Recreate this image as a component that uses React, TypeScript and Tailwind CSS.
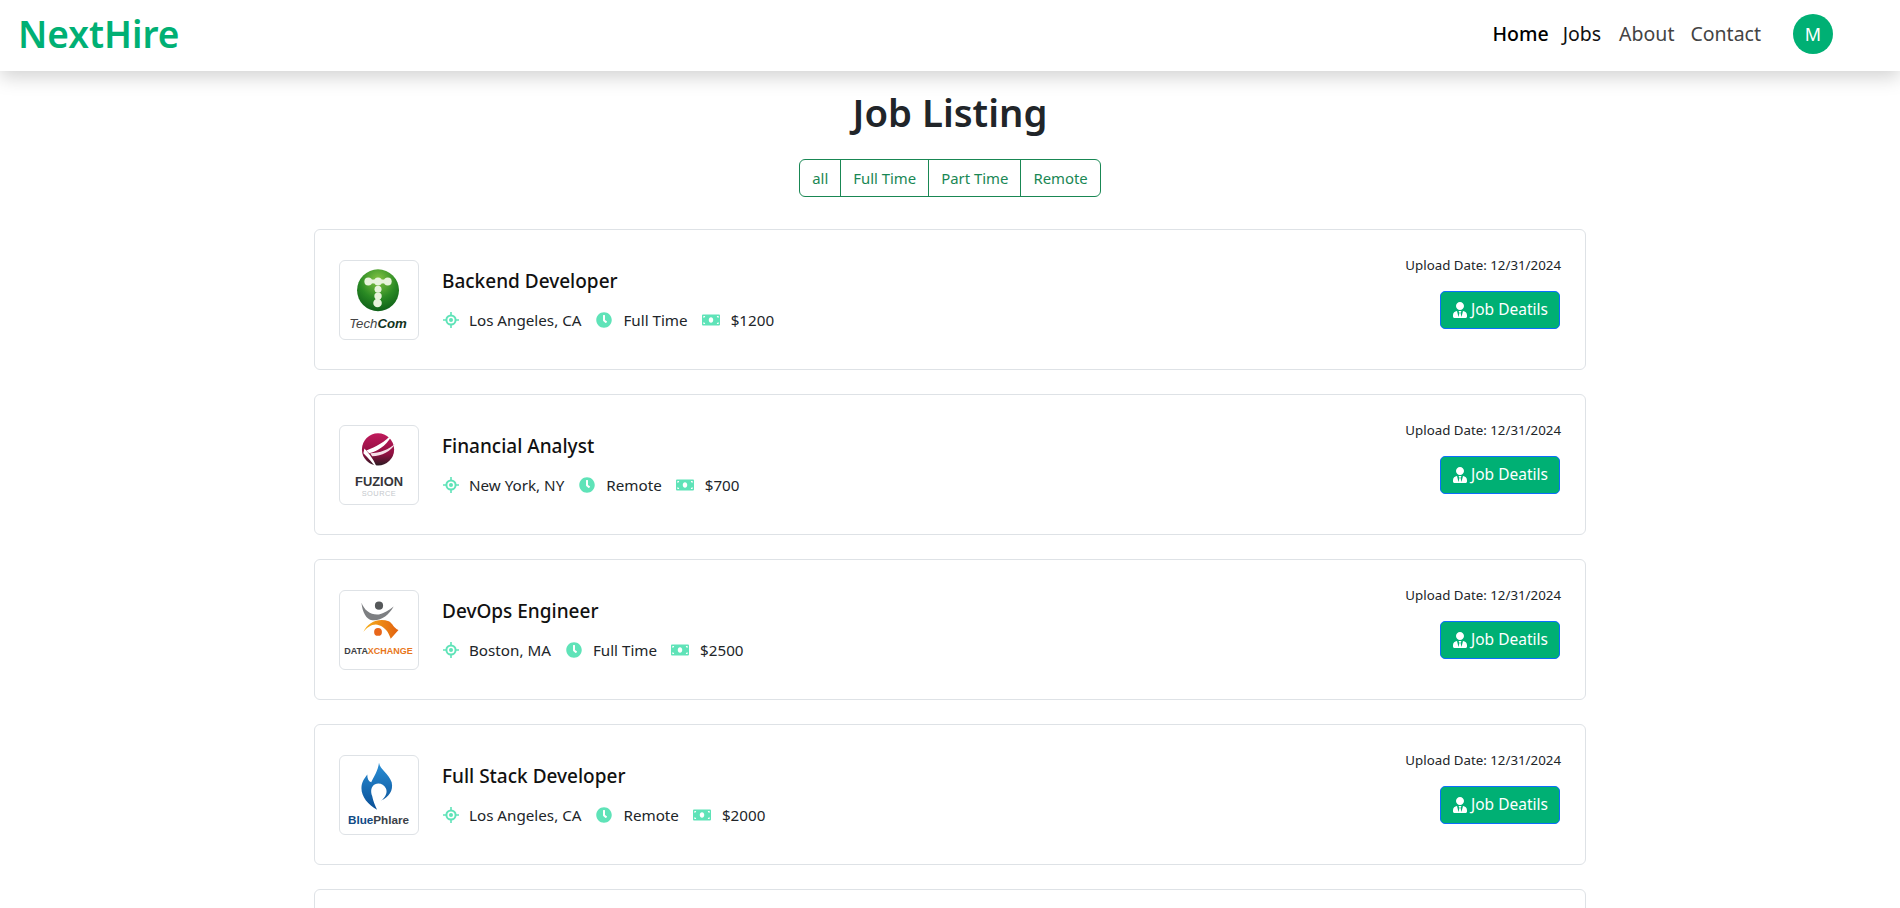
import React from "react";
import { FaClock, FaMoneyBill, FaUserTie } from "react-icons/fa";

const FONT = "font-['Noto_Sans','Open_Sans',sans-serif]";

function LocationIcon() {
  return (
    <svg viewBox="0 0 16 16" className="h-4 w-4 text-[#5fe3b8]" fill="none" stroke="currentColor">
      <circle cx="8" cy="8" r="4.6" strokeWidth="2" />
      <circle cx="8" cy="8" r="2" fill="currentColor" stroke="none" />
      <path d="M8 0v3M8 13v3M0 8h3M13 8h3" strokeWidth="1.6" />
    </svg>
  );
}

function TechComLogo() {
  return (
    <svg viewBox="0 0 80 80" className="h-full w-full">
      <defs>
        <radialGradient id="tc" cx="50%" cy="25%" r="80%">
          <stop offset="0%" stopColor="#86c544" />
          <stop offset="55%" stopColor="#2a8a24" />
          <stop offset="100%" stopColor="#0b5a17" />
        </radialGradient>
      </defs>
      <circle cx="39" cy="30" r="21.5" fill="url(#tc)" />
      <g fill="#e8f3dc">
        <circle cx="29" cy="21" r="4" />
        <circle cx="39" cy="21" r="4" />
        <circle cx="49" cy="21" r="4" />
        <circle cx="39" cy="29" r="3.6" />
        <circle cx="39" cy="36" r="3.8" />
        <circle cx="38.5" cy="43" r="4.4" />
        <rect x="29" y="19" width="20" height="4" />
      </g>
      <text x="39" y="69" textAnchor="middle" fontFamily="'Liberation Sans',sans-serif" fontStyle="italic" fontSize="13.6" fill="#444">
        Tech<tspan fontWeight="700" fill="#12331c">Com</tspan>
      </text>
    </svg>
  );
}

function FuzionLogo() {
  return (
    <svg viewBox="0 0 80 80" className="h-full w-full">
      <defs>
        <linearGradient id="fz" x1="0" y1="0" x2="0" y2="1">
          <stop offset="0%" stopColor="#c01a5c" />
          <stop offset="65%" stopColor="#8e1040" />
          <stop offset="100%" stopColor="#2b1a22" />
        </linearGradient>
      </defs>
      <circle cx="39" cy="24" r="16.5" fill="url(#fz)" />
      <path d="M27 25 C37 22 46 16 54 8 C50 17 42 25 30 28 Z" fill="#fff" />
      <path d="M31 28 C41 28 50 24 57 18 C52 26 43 31 33 31 Z" fill="#f4dfe7" />
      <path d="M25 23 C30 28 36 36 39 46 C34 38 29 33 24 28 Z" fill="#fff" />
      <text x="40" y="62" textAnchor="middle" fontFamily="'Liberation Sans',sans-serif" fontWeight="700" fontSize="13.2" fill="#35353a">
        FUZION
      </text>
      <text x="40" y="72" textAnchor="middle" fontFamily="'Liberation Sans',sans-serif" fontSize="7.6" letterSpacing="0.5" fill="#c4c8cc">
        SOURCE
      </text>
    </svg>
  );
}

function DataXLogo() {
  return (
    <svg viewBox="0 0 80 80" className="h-full w-full">
      <defs>
        <linearGradient id="dx" x1="0" y1="0" x2="1" y2="0">
          <stop offset="0%" stopColor="#f7b21c" />
          <stop offset="100%" stopColor="#e2600f" />
        </linearGradient>
      </defs>
      <path d="M22 12 C25 20 32 25 40 24 C45 23 50 20 55 16 C50 25 42 31 33 30 C27 29 23 22 22 12 Z" fill="#7d7f82" />
      <circle cx="40" cy="15" r="4.2" fill="#55585a" />
      <path d="M24 42 C28 32 40 27 50 31 C54 33 55 38 60 40 L52 49 C50 42 46 37 40 35 C34 33 28 37 24 42 Z" fill="url(#dx)" />
      <circle cx="39" cy="42" r="4" fill="#e8661a" />
      <text x="39.5" y="65" textAnchor="middle" fontFamily="'Liberation Sans',sans-serif" fontWeight="700" fontSize="9.2" fill="#3d3f44">
        DATA<tspan fill="#e8761a">XCHANGE</tspan>
      </text>
    </svg>
  );
}

function BluePhlareLogo() {
  return (
    <svg viewBox="0 0 80 80" className="h-full w-full">
      <defs>
        <linearGradient id="bp" x1="0" y1="0" x2="0" y2="1">
          <stop offset="0%" stopColor="#2a8fd6" />
          <stop offset="100%" stopColor="#0a4f96" />
        </linearGradient>
      </defs>
      <path
        d="M40 7 C41 14 50 18 53 27 C55 36 50 42 42 46 C47 42 49 37 47 33 C45 29 40 27 36 29 C32 31 31 36 33 41 C34 46 36 51 38 55 C29 50 22 42 22 33 C22 27 25 23 28 19 C28 23 29 26 32 27 C35 21 39 15 40 7 Z"
        fill="url(#bp)"
      />
      <text x="39.5" y="70" textAnchor="middle" fontFamily="'Liberation Sans',sans-serif" fontWeight="700" fontSize="12" fill="#0f4a86">
        Blue<tspan fill="#3c4148">Phlare</tspan>
      </text>
    </svg>
  );
}

const JOBS = [
  { title: "Backend Developer", place: "Los Angeles, CA", type: "Full Time", pay: "$1200", logo: <TechComLogo /> },
  { title: "Financial Analyst", place: "New York, NY", type: "Remote", pay: "$700", logo: <FuzionLogo /> },
  { title: "DevOps Engineer", place: "Boston, MA", type: "Full Time", pay: "$2500", logo: <DataXLogo /> },
  { title: "Full Stack Developer", place: "Los Angeles, CA", type: "Remote", pay: "$2000", logo: <BluePhlareLogo /> },
];

const FILTERS = ["all", "Full Time", "Part Time", "Remote"];

export default function App() {
  return (
    <div className={`h-screen overflow-hidden bg-white text-[#212529] ${FONT}`}>
      <header className="relative flex h-[71px] items-center justify-between pb-[3px] pl-[18px] pr-[67px] shadow-[0_6px_18px_rgba(0,0,0,0.18)]">
        <span className="text-[37px] font-semibold text-[#00b074]">NextHire</span>
        <nav className="flex items-center text-[19.5px]">
          <a className="font-medium text-black">Home</a>
          <a className="ml-[14px] text-[#111]">Jobs</a>
          <a className="ml-[18px] text-[#444]">About</a>
          <a className="ml-4 text-[#444]">Contact</a>
          <span className="ml-8 grid h-10 w-10 place-items-center rounded-full bg-[#00b074] text-[18px] text-white">M</span>
        </nav>
      </header>

      <main className="mx-auto flex w-[1272px] flex-col items-center">
        <h1 className="mt-4 text-[38.3px] leading-[50px] font-semibold">Job Listing</h1>
        <div className="mt-[22px] flex h-[38px] overflow-hidden rounded-md border border-[#198754] text-[14.9px] text-[#198754]">
          {FILTERS.map((f, i) => (
            <button key={f} className={`px-3 ${i > 0 ? "border-l border-[#198754]" : ""}`}>
              {f}
            </button>
          ))}
        </div>

        <div className="mt-8 flex w-full flex-col gap-6">
          {JOBS.map((job) => (
            <div key={job.title} className="flex h-[141px] items-center justify-between rounded-md border border-[#dee2e6] px-6">
              <div className="flex items-center">
                <div className="h-20 w-20 overflow-hidden rounded-md border border-[#dee2e6]">{job.logo}</div>
                <div className="ml-[23px]">
                  <h2 className="text-[19px] leading-6 font-medium text-[#111]">{job.title}</h2>
                  <div className="mt-[17px] flex items-center pl-px text-[15.2px] leading-5">
                    <LocationIcon />
                    <span className="ml-[10px]">{job.place}</span>
                    <FaClock className="ml-[15px] text-[#5fe3b8]" size={16} />
                    <span className="ml-[11px]">{job.type}</span>
                    <FaMoneyBill className="ml-[14px] text-[#5fe3b8]" size={18} />
                    <span className="ml-[11px]">{job.pay}</span>
                  </div>
                </div>
              </div>
              <div className="flex flex-col items-end pb-[15px]">
                <span className="text-[13.3px] leading-5">Upload Date: 12/31/2024</span>
                <button className="mt-4 mr-px flex h-[38px] w-[120px] items-center justify-center gap-[3px] rounded-[5px] border border-[#0d6efd] bg-[#00b074] text-[15.5px] text-white">
                  <FaUserTie size={16} />
                  Job Deatils
                </button>
              </div>
            </div>
          ))}
          <div className="h-[141px] rounded-md border border-[#dee2e6]" />
        </div>
      </main>
    </div>
  );
}
